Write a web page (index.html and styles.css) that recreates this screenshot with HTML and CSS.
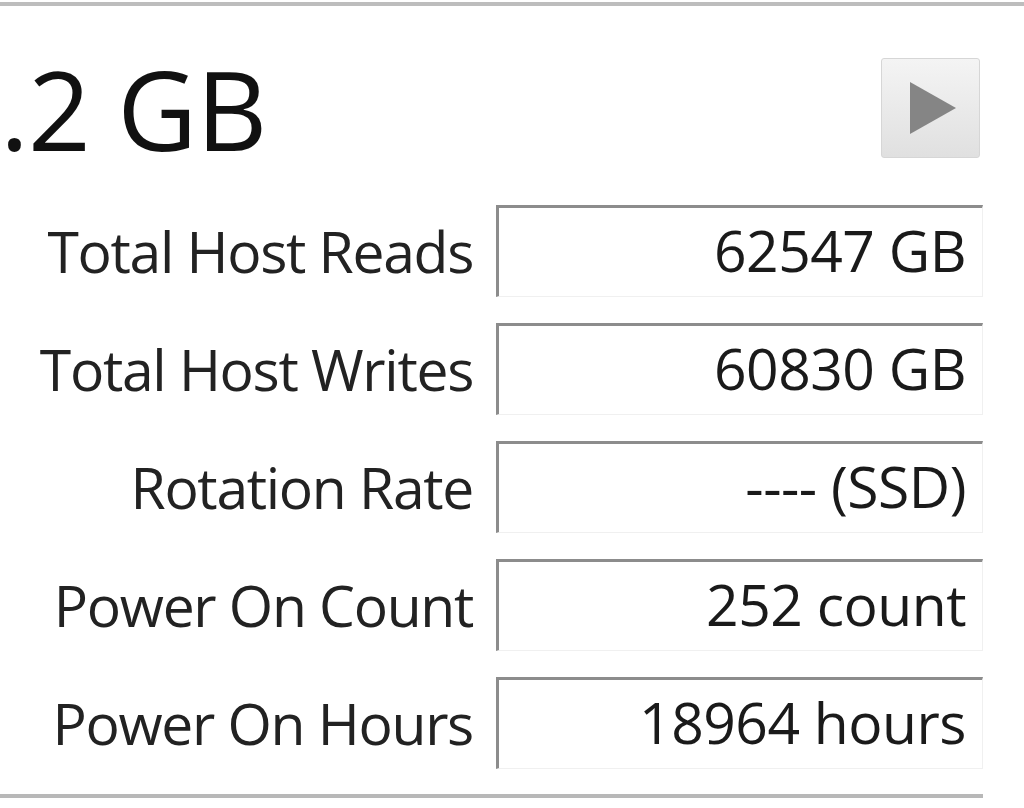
FILE: index.html
```html
<!DOCTYPE html>
<html lang="en">
<head>
  <meta charset="UTF-8">
  <title>Disk Info</title>
  <link rel="stylesheet" href="styles.css">
</head>
<body>
  <div class="panel">
    <!-- Capacity header -->
    <div class="header">
      <div class="capacity">.2 GB</div>
      <div class="next-btn">
        <svg width="50" height="52" viewBox="0 0 50 52"><polygon points="2,0 48,26 2,52" fill="#858585"/></svg>
      </div>
    </div>

    <!-- Info rows -->
    <div class="rows">
      <div class="row">
        <div class="label">Total Host Reads</div>
        <div class="value">62547 GB</div>
      </div>
      <div class="row">
        <div class="label">Total Host Writes</div>
        <div class="value">60830 GB</div>
      </div>
      <div class="row">
        <div class="label">Rotation Rate</div>
        <div class="value">---- (SSD)</div>
      </div>
      <div class="row">
        <div class="label">Power On Count</div>
        <div class="value">252 count</div>
      </div>
      <div class="row">
        <div class="label">Power On Hours</div>
        <div class="value">18964 hours</div>
      </div>
    </div>
  </div>
</body>
</html>
```

FILE: styles.css
```css
body {
  margin: 0;
  padding: 0;
  background: #fff;
  font-family: 'Open Sans', sans-serif;
  color: #1a1a1a;
  overflow: hidden;
}
.panel {
  border-top: 4px solid #bdbdbd;
  margin-top: 2px;
  height: 808px;
  overflow: hidden;
}

/* Header */
.header {
  width: 983px;
  height: 199px;
  display: flex;
  justify-content: space-between;
  align-items: flex-start;
}
.capacity {
  font-size: 110px;
  line-height: 1;
  margin-top: 47px;
  margin-left: 0;
  letter-spacing: -1px;
  white-space: nowrap;
  color: #111;
}
.next-btn {
  width: 99px;
  height: 100px;
  margin-top: 52px;
  margin-right: 3px;
  border: 1px solid #d6d6d6;
  border-radius: 3px;
  background: linear-gradient(#f4f4f4, #e0e0e0);
  display: flex;
  align-items: center;
  justify-content: center;
  padding-left: 4px;
  box-sizing: border-box;
}

/* Rows */
.rows {
  width: 983px;
  display: flex;
  flex-direction: column;
  gap: 26px;
  padding-bottom: 25px;
  border-bottom: 4px solid #b8b8b8;
}
.row {
  display: grid;
  grid-template-columns: 473px 487px;
  column-gap: 23px;
  height: 92px;
  align-items: center;
}
.label {
  text-align: right;
  font-size: 57px;
  letter-spacing: -1.3px;
  white-space: nowrap;
  color: #222;
}
.value {
  height: 92px;
  box-sizing: border-box;
  border-top: 3px solid #8c8c8c;
  border-left: 3px solid #8c8c8c;
  border-right: 1px solid #f0f0f0;
  border-bottom: 1px solid #f0f0f0;
  text-align: right;
  padding-right: 16px;
  font-size: 57px;
  line-height: 84px;
  letter-spacing: -0.5px;
  white-space: nowrap;
  color: #1a1a1a;
}
```
